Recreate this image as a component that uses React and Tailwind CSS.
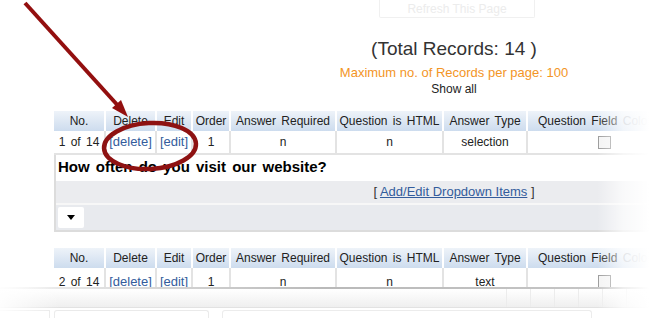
const cols = [
  { label: "No.", w: "w-[50px]" },
  { label: "Delete", w: "w-[49px]" },
  { label: "Edit", w: "w-[34px]" },
  { label: "Order", w: "w-[36px]" },
  { label: "Answer Required", w: "w-[104px]" },
  { label: "Question is HTML", w: "w-[105px]" },
  { label: "Answer Type", w: "w-[82px]" },
  { label: "Question Field Color", w: "w-[160px]" },
];

function Checkbox() {
  return <span className="inline-block w-[13px] h-[13px] border border-[#9a9a9a] bg-[#f4f4f4]" />;
}

function RecordTable({ no, type, rowPad = "" }) {
  const cells = [
    <span>{no}</span>,
    <a className="text-[#335c9c]">[delete]</a>,
    <a className="text-[#335c9c]">[edit]</a>,
    <span>1</span>,
    <span>n</span>,
    <span>n</span>,
    <span>{type}</span>,
    <Checkbox />,
  ];
  return (
    <div className="w-[700px] text-[12px] text-[#222] [word-spacing:2px]">
      <div className="flex gap-[2px] bg-white">
        {cols.map((c, i) => (
          <div
            key={i}
            className={`${c.w} h-[20px] shrink-0 flex items-center whitespace-nowrap bg-gradient-to-b from-[#eef3f9] to-[#cddcee] ${i === 7 ? "justify-start pl-[10px]" : "justify-center"}`}
          >
            {i === 7 ? (
              <span>
                Question Field <span className="text-[#9aa3b0]">Color</span>
              </span>
            ) : (
              c.label
            )}
          </div>
        ))}
      </div>
      <div className="flex gap-[2px] bg-[#e3e3e3] pb-[2px]">
        {cols.map((c, i) => (
          <div
            key={i}
            className={`${c.w} h-[22px] shrink-0 flex items-center justify-center bg-white ${rowPad} ${i === 1 || i === 2 ? "text-[13px] [word-spacing:0]" : ""} ${i === 7 ? "pr-[8px]" : ""}`}
          >
            {cells[i]}
          </div>
        ))}
      </div>
    </div>
  );
}

export default function App() {
  return (
    <div className="relative w-[649px] h-[318px] overflow-hidden bg-white font-['Liberation_Sans',Arial,sans-serif]">
      <div className="ml-[379px] w-[156px] h-[18px] border border-t-0 border-[#f0f0f0] rounded-b-[2px] flex items-center justify-center text-[12px] text-[#ececec]">
        Refresh This Page
      </div>

      <div className="ml-[54px] w-[800px] text-center pt-[20px]">
        <div className="text-[19px] leading-[22px] text-[#333]">(Total Records: 14 )</div>
        <div className="mt-[5px] text-[13px] leading-[15px] text-[#f39526]">
          Maximum no. of Records per page: 100
        </div>
        <div className="mt-[2px] text-[12px] leading-[14px] text-[#222]">Show all</div>
      </div>

      <div className="ml-[54px] mt-[15px]">
        <RecordTable no="1 of 14" type="selection" />
        <div className="w-[700px] border-l-2 border-[#dcdcdc]">
          <div className="h-[24px] flex items-center pl-[2px] text-[15px] font-bold text-black [word-spacing:2px]">
            How often do you visit our website?
          </div>
          <div className="h-[24px] mt-[2px] bg-[#ebecef] border-b-2 border-[#f7f7f7] flex items-center">
            <div className="w-[796px] shrink-0 text-center text-[13px] text-[#333]">
              [ <a className="text-[#335c9c] underline">Add/Edit Dropdown Items</a> ]
            </div>
          </div>
          <div className="h-[27px] bg-[#e8eaee] border-b-2 border-[#dcdcdc] flex items-center pl-[2px]">
            <div className="w-[26px] h-[21px] bg-white rounded-[2px] flex items-center justify-center">
              <span className="w-0 h-0 border-l-[4px] border-r-[4px] border-t-[5px] border-l-transparent border-r-transparent border-t-black" />
            </div>
          </div>
        </div>
        <div className="mt-[16px]">
          <RecordTable no="2 of 14" type="text" rowPad="pt-[5px]" />
        </div>
      </div>

      {/* torn bottom of the page */}
      <div className="absolute left-0 right-0 top-[287px] bottom-0 bg-white">
        <div className="h-[2px] bg-gradient-to-r from-[#f2f2f2] via-[#b9b9b9] to-[#c8c8c8]" />
        <div className="h-[18px] bg-gradient-to-b from-white to-[#efefef] flex">
          <div className="ml-[506px] flex">
            {[0, 1, 2, 3, 4, 5].map((i) => (
              <div key={i} className="w-[24px] h-full border-l border-[#ececec]" />
            ))}
          </div>
        </div>
        <div className="h-[1px] bg-[#e2e2e2]" />
        <div className="flex h-[12px] mt-[2px] gap-[4px]">
          <div className="w-[50px] border-r border-t border-[#e8e8e8]" />
          <div className="w-[155px] border border-b-0 border-[#eaeaea] rounded-t-[3px]" />
          <div className="w-[5px]" />
          <div className="w-[370px] border border-b-0 border-[#ececec] rounded-t-[3px]" />
        </div>
      </div>

      {/* right and bottom fades */}
      <div className="absolute right-0 top-[95px] bottom-0 w-[52px] bg-gradient-to-r from-white/0 via-white/70 to-white" />
      <div className="absolute left-0 top-[270px] bottom-0 w-[60px] bg-gradient-to-r from-white/90 to-white/0" />

      <svg className="absolute left-0 top-0 pointer-events-none" width="649" height="318">
        <line x1="25" y1="3" x2="121" y2="109" stroke="#930f0f" strokeWidth="4" />
        <polygon points="128,117 112,108 121,100" fill="#930f0f" />
        <ellipse cx="150" cy="146" rx="46" ry="23" fill="none" stroke="#8e1212" strokeWidth="4.5" transform="rotate(-3 150 146)" />
      </svg>
    </div>
  );
}
